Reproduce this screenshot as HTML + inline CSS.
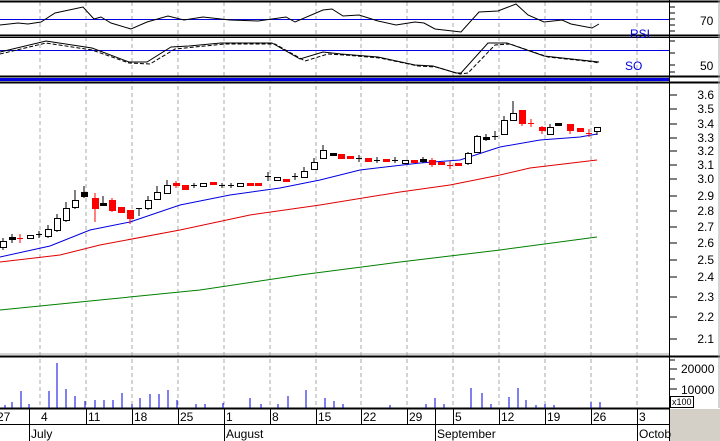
<!DOCTYPE html>
<html><head><meta charset="utf-8"><style>
body{margin:0;background:#fff}
svg{display:block;font-family:"Liberation Sans",sans-serif}
</style></head><body>
<svg width="720" height="441" viewBox="0 0 720 441" xmlns="http://www.w3.org/2000/svg">
<rect width="720" height="441" fill="#fff"/>
<g stroke="#aaa" stroke-dasharray="4,3" stroke-width="1">
<line x1="40" y1="2" x2="40" y2="408"/><line x1="86" y1="2" x2="86" y2="408"/><line x1="132" y1="2" x2="132" y2="408"/><line x1="178" y1="2" x2="178" y2="408"/><line x1="224" y1="2" x2="224" y2="408"/><line x1="270" y1="2" x2="270" y2="408"/><line x1="316" y1="2" x2="316" y2="408"/><line x1="361" y1="2" x2="361" y2="408"/><line x1="407" y1="2" x2="407" y2="408"/><line x1="453" y1="2" x2="453" y2="408"/><line x1="499" y1="2" x2="499" y2="408"/><line x1="545" y1="2" x2="545" y2="408"/><line x1="591" y1="2" x2="591" y2="408"/><line x1="637" y1="2" x2="637" y2="408"/>
</g>
<g stroke="#000" fill="none">
<line x1="0" y1="1.5" x2="720" y2="1.5" stroke-width="2"/>
<line x1="0" y1="35.5" x2="720" y2="35.5" stroke-width="2"/>
<line x1="0" y1="37.5" x2="720" y2="37.5"/>
<line x1="0" y1="76.5" x2="720" y2="76.5" stroke-width="2"/>
<line x1="0" y1="82.5" x2="720" y2="82.5" stroke-width="2"/>
<line x1="0" y1="356.5" x2="720" y2="356.5" stroke-width="2"/>
<line x1="0" y1="408.5" x2="669" y2="408.5" stroke-width="2"/>
<line x1="0" y1="424.5" x2="669" y2="424.5" stroke-width="1"/>
<line x1="669.5" y1="0" x2="669.5" y2="441"/>
</g>
<line x1="0" y1="79.5" x2="669" y2="79.5" stroke="#0000e0" stroke-width="3"/>
<line x1="0" y1="354" x2="669" y2="354" stroke="#aaa"/>
<line x1="719" y1="0" x2="719" y2="408" stroke="#aaa"/>
<line x1="0" y1="19.5" x2="669" y2="19.5" stroke="#0000e0"/>
<polyline fill="none" stroke="#000" points="0,25 18,23 28,24 41,22 55,13 83,7 94,19 101,17 111,23 131,29 147,22 168,16 184,20 203,17 230,20 258,21 286,17 295,22 323,10 332,9 343,16 359,15 378,21 396,25 415,22 424,23 435,29 461,32 479,12 498,11 516,4 528,15 544,22 562,20 571,24 592,28 599,24"/>
<text x="630" y="38" font-size="12" fill="#0000e0">RSI</text>
<text x="700" y="25" font-size="12">70</text>
<g stroke="#000"><line x1="669" y1="7" x2="675" y2="7"/><line x1="669" y1="13" x2="675" y2="13"/><line x1="669" y1="19" x2="675" y2="19"/><line x1="669" y1="25" x2="675" y2="25"/><line x1="669" y1="31" x2="675" y2="31"/></g>
<line x1="0" y1="50.5" x2="669" y2="50.5" stroke="#0000e0"/>
<polyline fill="none" stroke="#000" stroke-dasharray="4,2" points="0,54 46,43 92,50 129,63 150,64 175,49 195,47 225,44 275,44 305,61 328,54 345,55 380,58 418,66 436,67 460,74 468,73 495,45 510,44 548,57 594,62 599,63"/>
<polyline fill="none" stroke="#000" points="0,52 46,41 92,48 129,62 147,62 171,47 189,46 221,43 272,43 300,59 323,52 341,54 378,57 415,65 433,66 456,73 461,73 488,43 507,43 544,56 590,61 599,62"/>
<text x="625" y="70" font-size="12" fill="#0000e0">SO</text>
<text x="700" y="70" font-size="12">50</text>
<g stroke="#000"><line x1="669" y1="41" x2="675" y2="41"/><line x1="669" y1="53" x2="675" y2="53"/><line x1="669" y1="65" x2="675" y2="65"/><line x1="669" y1="72" x2="675" y2="72"/></g>
<g font-size="12" text-anchor="end">
<text x="714" y="99">3.6</text><text x="714" y="113">3.5</text><text x="714" y="128">3.4</text><text x="714" y="142">3.3</text><text x="714" y="155">3.2</text><text x="714" y="169">3.1</text><text x="714" y="183">3.0</text><text x="714" y="200">2.9</text><text x="714" y="215">2.8</text><text x="714" y="231">2.7</text><text x="714" y="247">2.6</text><text x="714" y="264">2.5</text><text x="714" y="281">2.4</text><text x="714" y="301">2.3</text><text x="714" y="321">2.2</text><text x="714" y="343">2.1</text>
</g>
<g stroke="#000">
<line x1="669" y1="95" x2="677" y2="95"/><line x1="669" y1="109" x2="677" y2="109"/><line x1="669" y1="124" x2="677" y2="124"/><line x1="669" y1="138" x2="677" y2="138"/><line x1="669" y1="151" x2="677" y2="151"/><line x1="669" y1="165" x2="677" y2="165"/><line x1="669" y1="179" x2="677" y2="179"/><line x1="669" y1="196" x2="677" y2="196"/><line x1="669" y1="211" x2="677" y2="211"/><line x1="669" y1="227" x2="677" y2="227"/><line x1="669" y1="243" x2="677" y2="243"/><line x1="669" y1="260" x2="677" y2="260"/><line x1="669" y1="277" x2="677" y2="277"/><line x1="669" y1="297" x2="677" y2="297"/><line x1="669" y1="317" x2="677" y2="317"/><line x1="669" y1="339" x2="677" y2="339"/>
</g>
<polyline fill="none" stroke="#008000" points="0,310 100,300 200,290 300,275 400,262 500,250 597,237"/>
<polyline fill="none" stroke="#e00000" points="0,262 60,255 100,245 180,230 250,215 320,205 400,192 450,185 500,175 530,168 597,160"/>
<polyline fill="none" stroke="#0000e0" points="0,257 50,246 90,230 130,222 180,205 230,195 280,188 320,180 360,170 420,163 460,160 500,147 540,140 580,137 597,134"/>
<g stroke="#000" stroke-width="1">
<g fill="#fff">
<line x1="3" y1="238" x2="3" y2="250"/><rect x="0.5" y="241.5" width="6" height="6"/>
<rect x="27.5" y="235.5" width="6" height="3"/>
<line x1="48" y1="225" x2="48" y2="238"/><rect x="45.5" y="229.5" width="6" height="7"/>
<line x1="57" y1="214" x2="57" y2="232"/><rect x="54.5" y="218.5" width="6" height="12"/>
<line x1="66" y1="202" x2="66" y2="222"/><rect x="63.5" y="208.5" width="6" height="12"/>
<line x1="75" y1="190" x2="75" y2="209"/><rect x="72.5" y="200.5" width="6" height="7"/>
<line x1="148" y1="196" x2="148" y2="210"/><rect x="145.5" y="200.5" width="6" height="8"/>
<line x1="157" y1="186" x2="157" y2="200"/><rect x="154.5" y="192.5" width="6" height="7"/>
<line x1="167" y1="180" x2="167" y2="194"/><rect x="164.5" y="185.5" width="6" height="8"/>
<rect x="200.5" y="183.5" width="6" height="3"/>
<rect x="237.5" y="183.5" width="6" height="3"/>
<rect x="274.5" y="177.5" width="6" height="3"/>
<line x1="304" y1="167" x2="304" y2="178"/><rect x="301.5" y="171.5" width="6" height="6"/>
<line x1="314" y1="158" x2="314" y2="170"/><rect x="311.5" y="162.5" width="6" height="7"/>
<line x1="323" y1="145" x2="323" y2="159"/><rect x="320.5" y="150.5" width="6" height="8"/>
<rect x="402.5" y="160.5" width="6" height="3"/>
<line x1="468" y1="152" x2="468" y2="165"/><rect x="465.5" y="153.5" width="6" height="10"/>
<line x1="477" y1="135" x2="477" y2="153"/><rect x="474.5" y="136.5" width="6" height="16"/>
<line x1="504" y1="116" x2="504" y2="135"/><rect x="501.5" y="120.5" width="6" height="14"/>
<line x1="513" y1="101" x2="513" y2="121"/><rect x="510.5" y="113.5" width="6" height="7"/>
<line x1="550" y1="124" x2="550" y2="135"/><rect x="547.5" y="127.5" width="6" height="7"/>
<line x1="597" y1="127" x2="597" y2="135"/><rect x="594.5" y="127.5" width="6" height="4"/>
</g>
<g fill="#000">
<rect x="9.5" y="237.5" width="6" height="2"/><line x1="12" y1="234" x2="12" y2="243"/>
<line x1="39" y1="231" x2="39" y2="238"/><line x1="36" y1="234.5" x2="42" y2="234.5"/>
<line x1="84" y1="186" x2="84" y2="198"/><rect x="81.5" y="192.5" width="6" height="4"/>
<line x1="103" y1="196" x2="103" y2="205"/><rect x="100.5" y="203.5" width="6" height="2"/>
<line x1="139" y1="208" x2="139" y2="216"/><line x1="136" y1="208.5" x2="142" y2="208.5"/>
<line x1="194" y1="183" x2="194" y2="188"/><line x1="191" y1="185.5" x2="197" y2="185.5"/>
<line x1="222" y1="183" x2="222" y2="188"/><line x1="219" y1="185.5" x2="225" y2="185.5"/>
<line x1="231" y1="183" x2="231" y2="188"/><line x1="228" y1="185.5" x2="234" y2="185.5"/>
<line x1="268" y1="172" x2="268" y2="181"/><line x1="265" y1="176.5" x2="271" y2="176.5"/>
<line x1="295" y1="173" x2="295" y2="180"/><line x1="292" y1="176.5" x2="298" y2="176.5"/>
<rect x="330.5" y="153.5" width="6" height="2"/>
<line x1="359" y1="155" x2="359" y2="162"/><line x1="356" y1="158.5" x2="362" y2="158.5"/>
<line x1="377" y1="157" x2="377" y2="163"/><line x1="374" y1="160.5" x2="380" y2="160.5"/>
<line x1="395" y1="157" x2="395" y2="163"/><line x1="392" y1="160.5" x2="398" y2="160.5"/>
<line x1="423" y1="157" x2="423" y2="163"/><rect x="420.5" y="159.5" width="6" height="2"/>
<line x1="486" y1="134" x2="486" y2="141"/><rect x="483.5" y="137.5" width="6" height="2"/>
<line x1="495" y1="131" x2="495" y2="140"/><line x1="492" y1="136.5" x2="498" y2="136.5"/>
<rect x="555.5" y="123.5" width="6" height="2"/>
</g>
<g fill="#f00" stroke="#f00">
<line x1="20" y1="234" x2="20" y2="243"/><line x1="17" y1="238.5" x2="23" y2="238.5"/>
<line x1="95" y1="193" x2="95" y2="222"/><rect x="92.5" y="198.5" width="6" height="10"/>
<line x1="112" y1="198" x2="112" y2="212"/><rect x="109.5" y="200.5" width="6" height="10"/>
<rect x="118.5" y="207.5" width="6" height="5"/>
<line x1="130" y1="210" x2="130" y2="224"/><rect x="127.5" y="210.5" width="6" height="8"/>
<rect x="173.5" y="183.5" width="6" height="2"/><line x1="176" y1="181" x2="176" y2="188"/>
<rect x="182.5" y="185.5" width="6" height="4"/>
<rect x="210.5" y="182.5" width="6" height="2"/>
<rect x="247.5" y="183.5" width="6" height="2"/>
<rect x="255.5" y="183.5" width="6" height="2"/>
<rect x="283.5" y="179.5" width="6" height="2"/>
<rect x="338.5" y="154.5" width="6" height="4"/>
<rect x="347.5" y="156.5" width="6" height="2"/>
<rect x="365.5" y="158.5" width="6" height="3"/>
<rect x="383.5" y="159.5" width="6" height="2"/>
<rect x="411.5" y="160.5" width="6" height="2"/>
<line x1="432" y1="158" x2="432" y2="167"/><rect x="429.5" y="160.5" width="6" height="4"/>
<rect x="438.5" y="162.5" width="6" height="2"/>
<line x1="450" y1="161" x2="450" y2="169"/><line x1="447" y1="165.5" x2="453" y2="165.5"/>
<rect x="455.5" y="163.5" width="6" height="2"/>
<line x1="522" y1="110" x2="522" y2="126"/><rect x="519.5" y="110.5" width="6" height="13"/>
<line x1="531" y1="119" x2="531" y2="127"/><line x1="528" y1="123.5" x2="534" y2="123.5"/>
<line x1="542" y1="126" x2="542" y2="134"/><rect x="539.5" y="127.5" width="6" height="3"/>
<line x1="570" y1="124" x2="570" y2="134"/><rect x="567.5" y="124.5" width="6" height="6"/>
<rect x="577.5" y="128.5" width="6" height="3"/>
<line x1="589" y1="129" x2="589" y2="137"/><line x1="586" y1="133.5" x2="592" y2="133.5"/>
</g>
</g>
<g stroke="#0000e0" stroke-width="1">
<line x1="5" y1="408" x2="5" y2="405"/><line x1="12" y1="408" x2="12" y2="402"/><line x1="21" y1="408" x2="21" y2="391"/><line x1="29" y1="408" x2="29" y2="404"/><line x1="49" y1="408" x2="49" y2="391"/><line x1="57" y1="408" x2="57" y2="363"/><line x1="66" y1="408" x2="66" y2="389"/><line x1="75" y1="408" x2="75" y2="396"/><line x1="85" y1="408" x2="85" y2="401"/><line x1="95" y1="408" x2="95" y2="400"/><line x1="104" y1="408" x2="104" y2="400"/><line x1="113" y1="408" x2="113" y2="400"/><line x1="122" y1="408" x2="122" y2="393"/><line x1="132" y1="408" x2="132" y2="404"/><line x1="140" y1="408" x2="140" y2="398"/><line x1="150" y1="408" x2="150" y2="394"/><line x1="159" y1="408" x2="159" y2="394"/><line x1="168" y1="408" x2="168" y2="390"/><line x1="177" y1="408" x2="177" y2="400"/><line x1="196" y1="408" x2="196" y2="404"/><line x1="205" y1="408" x2="205" y2="404"/><line x1="223" y1="408" x2="223" y2="403"/><line x1="250" y1="408" x2="250" y2="398"/><line x1="261" y1="408" x2="261" y2="404"/><line x1="278" y1="408" x2="278" y2="404"/><line x1="288" y1="408" x2="288" y2="396"/><line x1="306" y1="408" x2="306" y2="390"/><line x1="325" y1="408" x2="325" y2="398"/><line x1="334" y1="408" x2="334" y2="401"/><line x1="343" y1="408" x2="343" y2="404"/><line x1="390" y1="408" x2="390" y2="405"/><line x1="426" y1="408" x2="426" y2="404"/><line x1="435" y1="408" x2="435" y2="398"/><line x1="444" y1="408" x2="444" y2="404"/><line x1="471" y1="408" x2="471" y2="388"/><line x1="482" y1="408" x2="482" y2="393"/><line x1="491" y1="408" x2="491" y2="404"/><line x1="509" y1="408" x2="509" y2="397"/><line x1="518" y1="408" x2="518" y2="388"/><line x1="526" y1="408" x2="526" y2="400"/><line x1="536" y1="408" x2="536" y2="405"/><line x1="545" y1="408" x2="545" y2="404"/><line x1="554" y1="408" x2="554" y2="405"/><line x1="591" y1="408" x2="591" y2="402"/><line x1="600" y1="408" x2="600" y2="402"/>
</g>
<g font-size="12"><text x="681" y="373">20000</text><text x="681" y="394">10000</text></g>
<g stroke="#000"><line x1="669" y1="360" x2="675" y2="360"/><line x1="669" y1="369" x2="677" y2="369"/><line x1="669" y1="379" x2="675" y2="379"/><line x1="669" y1="389" x2="677" y2="389"/></g>
<rect x="670.5" y="396.5" width="23" height="11" fill="#fff" stroke="#000"/>
<text x="672" y="405" font-size="9">x100</text>
<rect x="670" y="409" width="50" height="32" fill="#d4d0c8"/>
<g stroke="#000">
<line x1="29.5" y1="408" x2="29.5" y2="441"/><line x1="86.5" y1="408" x2="86.5" y2="424"/><line x1="132.5" y1="408" x2="132.5" y2="424"/><line x1="178.5" y1="408" x2="178.5" y2="424"/><line x1="224.5" y1="408" x2="224.5" y2="441"/><line x1="270.5" y1="408" x2="270.5" y2="424"/><line x1="316.5" y1="408" x2="316.5" y2="424"/><line x1="361.5" y1="408" x2="361.5" y2="424"/><line x1="407.5" y1="408" x2="407.5" y2="424"/><line x1="435.5" y1="408" x2="435.5" y2="441"/><line x1="453.5" y1="408" x2="453.5" y2="424"/><line x1="499.5" y1="408" x2="499.5" y2="424"/><line x1="545.5" y1="408" x2="545.5" y2="424"/><line x1="591.5" y1="408" x2="591.5" y2="424"/><line x1="637.5" y1="408" x2="637.5" y2="441"/>
</g>
<g font-size="12">
<text x="-3" y="421">27</text><text x="41" y="421">4</text><text x="88" y="421">11</text><text x="134" y="421">18</text><text x="180" y="421">25</text><text x="226" y="421">1</text><text x="272" y="421">8</text><text x="318" y="421">15</text><text x="363" y="421">22</text><text x="409" y="421">29</text><text x="455" y="421">5</text><text x="501" y="421">12</text><text x="547" y="421">19</text><text x="593" y="421">26</text><text x="639" y="421">3</text>
<text x="31" y="438">July</text><text x="226" y="438">August</text><text x="437" y="438">September</text><text x="639" y="438">Octob</text>
</g>
</svg>
</body></html>
